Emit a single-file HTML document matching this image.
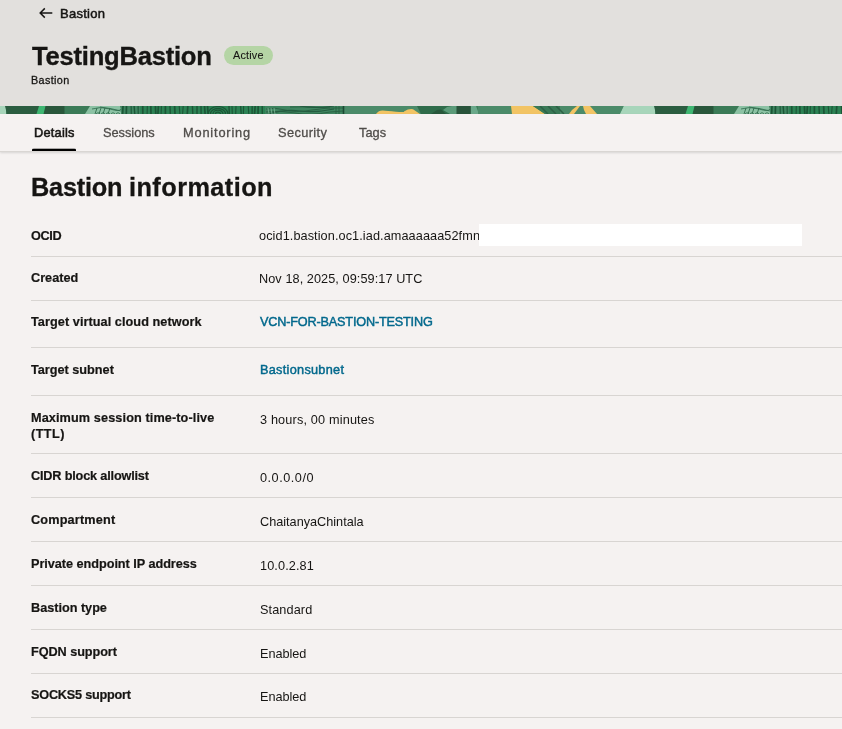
<!DOCTYPE html>
<html><head><meta charset="utf-8">
<style>
*{box-sizing:border-box;margin:0;padding:0}
html,body{width:842px;height:729px;overflow:hidden}
body{font-family:"Liberation Sans",sans-serif;background:#f5f2f1;color:#161513;position:relative}
.hdr{position:absolute;left:0;top:0;width:842px;height:106px;background:#e2e0dd}
.strip{position:absolute;left:0;top:106px;width:842px;height:8px;overflow:hidden}
.tabs{position:absolute;left:0;top:114px;width:842px;height:38px;background:#f5f2f1;border-bottom:1px solid #d9d6d3;box-shadow:0 1px 2px rgba(0,0,0,.12)}
.t{position:absolute;white-space:nowrap;line-height:1;will-change:transform}
.row{position:absolute;left:31px;width:811px;height:1px;background:#d8d5d2}
</style></head><body>
<div class="hdr"></div>
<svg style="position:absolute;left:38px;top:7px" width="16" height="12" viewBox="0 0 16 12"><path d="M6.8 1.4 L2.2 6 L6.8 10.6 M2.2 6 H14.3" fill="none" stroke="#161513" stroke-width="1.5"/></svg>
<div style="position:absolute;left:224px;top:46px;width:49px;height:19px;border-radius:10px;background:#b5d5a5"></div>
<svg class="strip" width="842" height="8" viewBox="0 0 842 8" preserveAspectRatio="none"><rect width="842" height="8" fill="#3f7f5a"/><polygon points="-25.0,0 6.0,0 6.0,8 -28.5,8" fill="#a7d5ba"/>
<polygon points="5.0,0 38.0,0 36.0,8 7.0,8" fill="#2b5d40"/>
<rect x="36.0" y="0" width="30.0" height="8" fill="#2b5d40"/>
<polygon points="39.0,0 45.5,0 43.5,8 36.5,8" fill="#3eb772"/>
<polygon points="46.0,0 64.0,0 65.0,8 44.0,8" fill="#29573b"/>
<rect x="64.5" y="0" width="25.5" height="8" fill="#3b7b57"/>
<polygon points="90.0,0 120.0,0 122.0,8 85.0,8" fill="#8cc2a4"/>
<rect x="121.0" y="0" width="20.0" height="8" fill="#3f8560"/>
<rect x="140.0" y="0" width="126.0" height="8" fill="#2c8254"/>
<rect x="265.0" y="0" width="80.0" height="8" fill="#3f8560"/>
<rect x="344.0" y="0" width="77.0" height="8" fill="#4b8b69"/>
<polygon points="417.0,0 458.0,0 458.0,8 421.0,8" fill="#2f6c4a"/>
<polygon points="431.0,8 437.0,4 441.0,3.5 446.0,8" fill="#28583c"/>
<polygon points="447.0,1 452.0,0 458.0,0 458.0,8 450.0,8 443.0,4" fill="#5b9b79"/>
<rect x="456.5" y="0" width="14.5" height="8" fill="#28533a"/>
<polygon points="470.8,0 476.0,0 479.0,8 470.8,8" fill="#6aa98a"/>
<rect x="478.0" y="0" width="34.0" height="8" fill="#4b8b69"/>
<polygon points="511.0,0 533.0,0 545.0,8 512.0,8" fill="#f2c464"/>
<polygon points="533.0,0 562.0,0 562.0,8 545.0,8" fill="#3a7a57"/>
<rect x="560.0" y="0" width="65.0" height="8" fill="#4b8b69"/>
<polygon points="572.0,4 577.0,0 580.0,0 574.0,8 569.0,8" fill="#f2c464"/>
<polygon points="583.0,0 590.0,0 597.0,8 586.0,8 584.0,4" fill="#f2c464"/>
<polygon points="624.0,0 652.0,0 655.0,8 620.0,8" fill="#a7d5ba"/><path d="M95.0 8 L97.0 2" stroke="#2f6b4b" stroke-width="0.9" fill="none"/>
<path d="M99.0 8 L101.0 2" stroke="#2f6b4b" stroke-width="0.9" fill="none"/>
<path d="M103.0 8 L105.0 2" stroke="#2f6b4b" stroke-width="0.9" fill="none"/>
<path d="M108.0 8 L110.0 2" stroke="#2f6b4b" stroke-width="0.9" fill="none"/>
<path d="M92 3 Q100 0 110 3 T121 3" stroke="#2f6b4b" stroke-width="0.8" fill="none"/>
<path d="M100 1 Q110 2 121 5" stroke="#2f6b4b" stroke-width="0.8" fill="none"/>
<path d="M123.0 0 L122.6 8" stroke="#1b5636" stroke-width="1.7" fill="none"/>
<path d="M126.5 0 L126.3 8" stroke="#1b5636" stroke-width="1.7" fill="none"/>
<path d="M131.1 0 L131.3 8" stroke="#1b5636" stroke-width="1.1" fill="none"/>
<path d="M134.1 0 L134.8 8" stroke="#1b5636" stroke-width="1.4" fill="none"/>
<path d="M138.1 0 L138.2 8" stroke="#1b5636" stroke-width="1.1" fill="none"/>
<path d="M142.7 0 L142.8 8" stroke="#1b5636" stroke-width="1.7" fill="none"/>
<path d="M147.3 0 L147.1 8" stroke="#1b5636" stroke-width="1.1" fill="none"/>
<path d="M150.8 0 L151.0 8" stroke="#1b5636" stroke-width="1.7" fill="none"/>
<path d="M155.4 0 L155.8 8" stroke="#1b5636" stroke-width="1.7" fill="none"/>
<path d="M158.4 0 L157.9 8" stroke="#1b5636" stroke-width="1.7" fill="none"/>
<path d="M161.4 0 L161.1 8" stroke="#1b5636" stroke-width="1.1" fill="none"/>
<path d="M165.4 0 L165.4 8" stroke="#1b5636" stroke-width="1.7" fill="none"/>
<path d="M170.0 0 L170.3 8" stroke="#1b5636" stroke-width="1.4" fill="none"/>
<path d="M174.6 0 L175.0 8" stroke="#1b5636" stroke-width="1.7" fill="none"/>
<path d="M179.2 0 L179.9 8" stroke="#1b5636" stroke-width="1.1" fill="none"/>
<path d="M183.2 0 L182.6 8" stroke="#1b5636" stroke-width="1.1" fill="none"/>
<path d="M187.8 0 L187.3 8" stroke="#1b5636" stroke-width="1.7" fill="none"/>
<path d="M192.4 0 L192.8 8" stroke="#1b5636" stroke-width="1.4" fill="none"/>
<path d="M197.0 0 L197.0 8" stroke="#1b5636" stroke-width="1.4" fill="none"/>
<path d="M201.0 0 L201.1 8" stroke="#1b5636" stroke-width="1.4" fill="none"/>
<path d="M204.5 0 L205.1 8" stroke="#1b5636" stroke-width="1.7" fill="none"/>
<path d="M207.5 0 L208.1 8" stroke="#1b5636" stroke-width="1.7" fill="none"/>
<path d="M229.0 0 L229.3 8" stroke="#1b5636" stroke-width="1.4" fill="none"/>
<path d="M232.0 0 L232.3 8" stroke="#1b5636" stroke-width="1.1" fill="none"/>
<path d="M236.0 0 L235.7 8" stroke="#1b5636" stroke-width="1.1" fill="none"/>
<path d="M240.6 0 L241.2 8" stroke="#1b5636" stroke-width="1.4" fill="none"/>
<path d="M243.6 0 L243.4 8" stroke="#1b5636" stroke-width="1.1" fill="none"/>
<path d="M248.2 0 L248.8 8" stroke="#1b5636" stroke-width="1.1" fill="none"/>
<path d="M252.2 0 L252.1 8" stroke="#1b5636" stroke-width="1.4" fill="none"/>
<path d="M255.2 0 L254.5 8" stroke="#1b5636" stroke-width="1.7" fill="none"/>
<path d="M258.2 0 L258.0 8" stroke="#1b5636" stroke-width="1.7" fill="none"/>
<path d="M262.2 0 L262.3 8" stroke="#1b5636" stroke-width="1.4" fill="none"/>
<path d="M215.5 8 A2.5 1.9 0 0 1 220.5 8" stroke="#1b5636" stroke-width="1.2" fill="none"/>
<path d="M213 8 A5 3.8 0 0 1 223 8" stroke="#1b5636" stroke-width="1.2" fill="none"/>
<path d="M210.5 8 A7.5 5.6 0 0 1 225.5 8" stroke="#1b5636" stroke-width="1.2" fill="none"/>
<path d="M208 8 A10 7.5 0 0 1 228 8" stroke="#1b5636" stroke-width="1.2" fill="none"/>
<path d="M266 3 Q275 1 285 4 T312 4 T343 2" stroke="#2a6445" stroke-width="1" fill="none"/>
<path d="M266 6 Q280 4 295 7 T330 6 L343 5" stroke="#2a6445" stroke-width="1" fill="none"/>
<path d="M290 1 Q310 0 330 2" stroke="#2a6445" stroke-width="1" fill="none"/>
<path d="M336.0 0 L336.0 8" stroke="#2a6445" stroke-width="1" fill="none"/>
<path d="M339.0 0 L339.0 8" stroke="#2a6445" stroke-width="1" fill="none"/>
<path d="M343.5 0 L343.5 8" stroke="#1b4a33" stroke-width="1.6" fill="none"/>
<path d="M268 8 Q285 3 300 5 T334 3" stroke="#245c40" stroke-width="1.2" fill="none"/>
<path d="M300 0 Q315 3 334 0" stroke="#245c40" stroke-width="1.2" fill="none"/>
<path d="M96 8 A2.5 3 0 0 1 100 8" stroke="#2f6b4b" stroke-width="0.8" fill="none"/>
<path d="M101 8 A2.5 3 0 0 1 105 8" stroke="#2f6b4b" stroke-width="0.8" fill="none"/>
<path d="M106 8 A2.5 3 0 0 1 110 8" stroke="#2f6b4b" stroke-width="0.8" fill="none"/>
<path d="M111 8 A2.5 3 0 0 1 115 8" stroke="#2f6b4b" stroke-width="0.8" fill="none"/>
<path d="M116 8 A2.5 3 0 0 1 120 8" stroke="#2f6b4b" stroke-width="0.8" fill="none"/>
<path d="M268.0 2 L269.0 8" stroke="#7fb799" stroke-width="0.8" fill="none"/>
<path d="M271.0 2 L272.0 8" stroke="#7fb799" stroke-width="0.8" fill="none"/>
<path d="M274.0 2 L275.0 8" stroke="#7fb799" stroke-width="0.8" fill="none"/>
<path d="M376 8 Q379 4.2 383 4.6 T396 5.8 T404 5.4 Q409 2.4 413 3.2 L420 8 Z" fill="#f2c464"/>
<path d="M540.0 0 L548.0 8" stroke="#2d6246" stroke-width="1.5" fill="none"/>
<path d="M548.0 0 L556.0 8" stroke="#2d6246" stroke-width="1.5" fill="none"/>
<path d="M556.0 0 L564.0 8" stroke="#2d6246" stroke-width="1.5" fill="none"/><polygon points="624.0,0 655.0,0 655.0,8 620.5,8" fill="#a7d5ba"/>
<polygon points="654.0,0 687.0,0 685.0,8 656.0,8" fill="#2b5d40"/>
<rect x="685.0" y="0" width="30.0" height="8" fill="#2b5d40"/>
<polygon points="688.0,0 694.5,0 692.5,8 685.5,8" fill="#3eb772"/>
<polygon points="695.0,0 713.0,0 714.0,8 693.0,8" fill="#29573b"/>
<rect x="713.5" y="0" width="25.5" height="8" fill="#3b7b57"/>
<polygon points="739.0,0 769.0,0 771.0,8 734.0,8" fill="#8cc2a4"/>
<rect x="770.0" y="0" width="20.0" height="8" fill="#3f8560"/>
<rect x="789.0" y="0" width="126.0" height="8" fill="#2c8254"/>
<rect x="914.0" y="0" width="80.0" height="8" fill="#3f8560"/>
<rect x="993.0" y="0" width="77.0" height="8" fill="#4b8b69"/>
<polygon points="1066.0,0 1107.0,0 1107.0,8 1070.0,8" fill="#2f6c4a"/>
<polygon points="1080.0,8 1086.0,4 1090.0,3.5 1095.0,8" fill="#28583c"/>
<polygon points="1096.0,1 1101.0,0 1107.0,0 1107.0,8 1099.0,8 1092.0,4" fill="#5b9b79"/>
<rect x="1105.5" y="0" width="14.5" height="8" fill="#28533a"/>
<polygon points="1119.8,0 1125.0,0 1128.0,8 1119.8,8" fill="#6aa98a"/>
<rect x="1127.0" y="0" width="34.0" height="8" fill="#4b8b69"/>
<polygon points="1160.0,0 1182.0,0 1194.0,8 1161.0,8" fill="#f2c464"/>
<polygon points="1182.0,0 1211.0,0 1211.0,8 1194.0,8" fill="#3a7a57"/>
<rect x="1209.0" y="0" width="65.0" height="8" fill="#4b8b69"/>
<polygon points="1221.0,4 1226.0,0 1229.0,0 1223.0,8 1218.0,8" fill="#f2c464"/>
<polygon points="1232.0,0 1239.0,0 1246.0,8 1235.0,8 1233.0,4" fill="#f2c464"/>
<polygon points="1273.0,0 1301.0,0 1304.0,8 1269.0,8" fill="#a7d5ba"/><path d="M744.0 8 L746.0 2" stroke="#2f6b4b" stroke-width="0.9" fill="none"/>
<path d="M748.0 8 L750.0 2" stroke="#2f6b4b" stroke-width="0.9" fill="none"/>
<path d="M752.0 8 L754.0 2" stroke="#2f6b4b" stroke-width="0.9" fill="none"/>
<path d="M757.0 8 L759.0 2" stroke="#2f6b4b" stroke-width="0.9" fill="none"/>
<path d="M741 3 Q749 0 759 3 T770 3" stroke="#2f6b4b" stroke-width="0.8" fill="none"/>
<path d="M749 1 Q759 2 770 5" stroke="#2f6b4b" stroke-width="0.8" fill="none"/>
<path d="M772.0 0 L771.6 8" stroke="#1b5636" stroke-width="1.7" fill="none"/>
<path d="M775.5 0 L775.3 8" stroke="#1b5636" stroke-width="1.7" fill="none"/>
<path d="M780.1 0 L780.3 8" stroke="#1b5636" stroke-width="1.1" fill="none"/>
<path d="M783.1 0 L783.8 8" stroke="#1b5636" stroke-width="1.4" fill="none"/>
<path d="M787.1 0 L787.2 8" stroke="#1b5636" stroke-width="1.1" fill="none"/>
<path d="M791.7 0 L791.8 8" stroke="#1b5636" stroke-width="1.7" fill="none"/>
<path d="M796.3 0 L796.1 8" stroke="#1b5636" stroke-width="1.1" fill="none"/>
<path d="M799.8 0 L800.0 8" stroke="#1b5636" stroke-width="1.7" fill="none"/>
<path d="M804.4 0 L804.8 8" stroke="#1b5636" stroke-width="1.7" fill="none"/>
<path d="M807.4 0 L806.9 8" stroke="#1b5636" stroke-width="1.7" fill="none"/>
<path d="M810.4 0 L810.1 8" stroke="#1b5636" stroke-width="1.1" fill="none"/>
<path d="M814.4 0 L814.4 8" stroke="#1b5636" stroke-width="1.7" fill="none"/>
<path d="M819.0 0 L819.3 8" stroke="#1b5636" stroke-width="1.4" fill="none"/>
<path d="M823.6 0 L824.0 8" stroke="#1b5636" stroke-width="1.7" fill="none"/>
<path d="M828.2 0 L828.9 8" stroke="#1b5636" stroke-width="1.1" fill="none"/>
<path d="M832.2 0 L831.6 8" stroke="#1b5636" stroke-width="1.1" fill="none"/>
<path d="M836.8 0 L836.3 8" stroke="#1b5636" stroke-width="1.7" fill="none"/>
<path d="M841.4 0 L841.8 8" stroke="#1b5636" stroke-width="1.4" fill="none"/>
<path d="M846.0 0 L846.0 8" stroke="#1b5636" stroke-width="1.4" fill="none"/>
<path d="M850.0 0 L850.1 8" stroke="#1b5636" stroke-width="1.4" fill="none"/>
<path d="M853.5 0 L854.1 8" stroke="#1b5636" stroke-width="1.7" fill="none"/>
<path d="M856.5 0 L857.1 8" stroke="#1b5636" stroke-width="1.7" fill="none"/>
<path d="M878.0 0 L878.3 8" stroke="#1b5636" stroke-width="1.4" fill="none"/>
<path d="M881.0 0 L881.3 8" stroke="#1b5636" stroke-width="1.1" fill="none"/>
<path d="M885.0 0 L884.7 8" stroke="#1b5636" stroke-width="1.1" fill="none"/>
<path d="M889.6 0 L890.2 8" stroke="#1b5636" stroke-width="1.4" fill="none"/>
<path d="M892.6 0 L892.4 8" stroke="#1b5636" stroke-width="1.1" fill="none"/>
<path d="M897.2 0 L897.8 8" stroke="#1b5636" stroke-width="1.1" fill="none"/>
<path d="M901.2 0 L901.1 8" stroke="#1b5636" stroke-width="1.4" fill="none"/>
<path d="M904.2 0 L903.5 8" stroke="#1b5636" stroke-width="1.7" fill="none"/>
<path d="M907.2 0 L907.0 8" stroke="#1b5636" stroke-width="1.7" fill="none"/>
<path d="M911.2 0 L911.3 8" stroke="#1b5636" stroke-width="1.4" fill="none"/>
<path d="M864.5 8 A2.5 1.9 0 0 1 869.5 8" stroke="#1b5636" stroke-width="1.2" fill="none"/>
<path d="M862 8 A5 3.8 0 0 1 872 8" stroke="#1b5636" stroke-width="1.2" fill="none"/>
<path d="M859.5 8 A7.5 5.6 0 0 1 874.5 8" stroke="#1b5636" stroke-width="1.2" fill="none"/>
<path d="M857 8 A10 7.5 0 0 1 877 8" stroke="#1b5636" stroke-width="1.2" fill="none"/>
<path d="M915 3 Q924 1 934 4 T961 4 T992 2" stroke="#2a6445" stroke-width="1" fill="none"/>
<path d="M915 6 Q929 4 944 7 T979 6 L992 5" stroke="#2a6445" stroke-width="1" fill="none"/>
<path d="M939 1 Q959 0 979 2" stroke="#2a6445" stroke-width="1" fill="none"/>
<path d="M985.0 0 L985.0 8" stroke="#2a6445" stroke-width="1" fill="none"/>
<path d="M988.0 0 L988.0 8" stroke="#2a6445" stroke-width="1" fill="none"/>
<path d="M992.5 0 L992.5 8" stroke="#1b4a33" stroke-width="1.6" fill="none"/>
<path d="M917 8 Q934 3 949 5 T983 3" stroke="#245c40" stroke-width="1.2" fill="none"/>
<path d="M949 0 Q964 3 983 0" stroke="#245c40" stroke-width="1.2" fill="none"/>
<path d="M745 8 A2.5 3 0 0 1 749 8" stroke="#2f6b4b" stroke-width="0.8" fill="none"/>
<path d="M750 8 A2.5 3 0 0 1 754 8" stroke="#2f6b4b" stroke-width="0.8" fill="none"/>
<path d="M755 8 A2.5 3 0 0 1 759 8" stroke="#2f6b4b" stroke-width="0.8" fill="none"/>
<path d="M760 8 A2.5 3 0 0 1 764 8" stroke="#2f6b4b" stroke-width="0.8" fill="none"/>
<path d="M765 8 A2.5 3 0 0 1 769 8" stroke="#2f6b4b" stroke-width="0.8" fill="none"/>
<path d="M917.0 2 L918.0 8" stroke="#7fb799" stroke-width="0.8" fill="none"/>
<path d="M920.0 2 L921.0 8" stroke="#7fb799" stroke-width="0.8" fill="none"/>
<path d="M923.0 2 L924.0 8" stroke="#7fb799" stroke-width="0.8" fill="none"/>
<path d="M1025 8 Q1028 4.2 1032 4.6 T1045 5.8 T1053 5.4 Q1058 2.4 1062 3.2 L1069 8 Z" fill="#f2c464"/>
<path d="M1189.0 0 L1197.0 8" stroke="#2d6246" stroke-width="1.5" fill="none"/>
<path d="M1197.0 0 L1205.0 8" stroke="#2d6246" stroke-width="1.5" fill="none"/>
<path d="M1205.0 0 L1213.0 8" stroke="#2d6246" stroke-width="1.5" fill="none"/></svg>
<div class="tabs"></div>
<div style="position:absolute;left:32px;top:148px;width:44px;height:3px;background:linear-gradient(to bottom,rgba(0,0,0,.3) 0,rgba(0,0,0,.3) 1px,#000 1px);border-radius:2px 2px 0 0"></div>

<span class="t" id="bc" style="left:60.39px;top:7.10px;font-size:13px;font-weight:400;color:#161513;letter-spacing:0.252px;-webkit-text-stroke:0.5px #161513">Bastion</span>
<span class="t" id="title" style="left:32.21px;top:43.53px;font-size:25.6px;font-weight:700;color:#161513;letter-spacing:-0.241px;-webkit-text-stroke:0.35px #161513">TestingBastion</span>
<span class="t" id="sub" style="left:31.08px;top:74.66px;font-size:10.8px;font-weight:400;color:#161513;letter-spacing:0.357px;-webkit-text-stroke:0.3px #161513">Bastion</span>
<span class="t" id="bt" style="left:233.36px;top:49.56px;font-size:10.8px;font-weight:400;color:#161513;letter-spacing:0.203px;-webkit-text-stroke:0.1px #161513">Active</span>
<span class="t" id="tab1" style="left:33.74px;top:127.16px;font-size:12.8px;font-weight:400;color:#161513;letter-spacing:0.234px;-webkit-text-stroke:0.55px #161513">Details</span>
<span class="t" id="tab2" style="left:103.18px;top:127.16px;font-size:12.8px;font-weight:400;color:#4f4c49;letter-spacing:-0.026px;-webkit-text-stroke:0.3px #4f4c49">Sessions</span>
<span class="t" id="tab3" style="left:182.58px;top:127.16px;font-size:12.8px;font-weight:400;color:#4f4c49;letter-spacing:0.823px;-webkit-text-stroke:0.3px #4f4c49">Monitoring</span>
<span class="t" id="tab4" style="left:278.04px;top:127.16px;font-size:12.8px;font-weight:400;color:#4f4c49;letter-spacing:0.366px;-webkit-text-stroke:0.3px #4f4c49">Security</span>
<span class="t" id="tab5" style="left:359.08px;top:127.16px;font-size:12.8px;font-weight:400;color:#4f4c49;letter-spacing:-0.002px;-webkit-text-stroke:0.3px #4f4c49">Tags</span>
<span class="t" id="h2a" style="left:31.26px;top:175.28px;font-size:25.3px;font-weight:700;color:#161513;letter-spacing:-0.219px;-webkit-text-stroke:0.3px #161513">Bastion</span>
<span class="t" id="h2b" style="left:128.80px;top:175.28px;font-size:25.3px;font-weight:700;color:#161513;letter-spacing:0.444px;-webkit-text-stroke:0.3px #161513">information</span>
<span class="t" id="l1" style="left:31.10px;top:229.75px;font-size:12.7px;font-weight:700;color:#161513;letter-spacing:-0.374px;-webkit-text-stroke:0.2px #161513">OCID</span>
<span class="t" id="l2" style="left:31.00px;top:272.05px;font-size:12.7px;font-weight:700;color:#161513;letter-spacing:-0.004px;-webkit-text-stroke:0.2px #161513">Created</span>
<span class="t" id="l3" style="left:31.19px;top:315.95px;font-size:12.7px;font-weight:700;color:#161513;letter-spacing:0.059px;-webkit-text-stroke:0.2px #161513">Target virtual cloud network</span>
<span class="t" id="l4" style="left:31.19px;top:363.55px;font-size:12.7px;font-weight:700;color:#161513;letter-spacing:-0.006px;-webkit-text-stroke:0.2px #161513">Target subnet</span>
<span class="t" id="l5a" style="left:30.74px;top:411.75px;font-size:12.7px;font-weight:700;color:#161513;letter-spacing:0.103px;-webkit-text-stroke:0.2px #161513">Maximum session time-to-live</span>
<span class="t" id="l5b" style="left:30.76px;top:427.75px;font-size:12.7px;font-weight:700;color:#161513;letter-spacing:0.420px;-webkit-text-stroke:0.2px #161513">(TTL)</span>
<span class="t" id="l6" style="left:31.11px;top:470.25px;font-size:12.7px;font-weight:700;color:#161513;letter-spacing:-0.173px;-webkit-text-stroke:0.2px #161513">CIDR block allowlist</span>
<span class="t" id="l7" style="left:31.32px;top:513.55px;font-size:12.7px;font-weight:700;color:#161513;letter-spacing:0.167px;-webkit-text-stroke:0.2px #161513">Compartment</span>
<span class="t" id="l8" style="left:30.74px;top:558.45px;font-size:12.7px;font-weight:700;color:#161513;letter-spacing:-0.040px;-webkit-text-stroke:0.2px #161513">Private endpoint IP address</span>
<span class="t" id="l9" style="left:30.52px;top:602.45px;font-size:12.7px;font-weight:700;color:#161513;letter-spacing:-0.020px;-webkit-text-stroke:0.2px #161513">Bastion type</span>
<span class="t" id="l10" style="left:30.80px;top:646.45px;font-size:12.7px;font-weight:700;color:#161513;letter-spacing:-0.066px;-webkit-text-stroke:0.2px #161513">FQDN support</span>
<span class="t" id="l11" style="left:30.98px;top:689.35px;font-size:12.7px;font-weight:700;color:#161513;letter-spacing:-0.221px;-webkit-text-stroke:0.2px #161513">SOCKS5 support</span>
<span class="t" id="v1" style="left:259.11px;top:230.25px;font-size:12.7px;font-weight:400;color:#161513;letter-spacing:0.088px">ocid1.bastion.oc1.iad.amaaaaaa52fmn</span>
<span class="t" id="v2" style="left:259.04px;top:272.95px;font-size:12.7px;font-weight:400;color:#161513;letter-spacing:0.074px">Nov 18, 2025, 09:59:17 UTC</span>
<span class="t" id="v3" style="left:260.10px;top:316.05px;font-size:12.7px;font-weight:400;color:#00688c;letter-spacing:-0.187px;-webkit-text-stroke:0.45px #00688c">VCN-FOR-BASTION-TESTING</span>
<span class="t" id="v4" style="left:259.57px;top:363.55px;font-size:12.7px;font-weight:400;color:#00688c;letter-spacing:0.295px;-webkit-text-stroke:0.45px #00688c">Bastionsubnet</span>
<span class="t" id="v5" style="left:259.69px;top:414.05px;font-size:12.7px;font-weight:400;color:#161513;letter-spacing:0.162px">3 hours, 00 minutes</span>
<span class="t" id="v6" style="left:259.81px;top:472.05px;font-size:12.7px;font-weight:400;color:#161513;letter-spacing:0.514px">0.0.0.0/0</span>
<span class="t" id="v7" style="left:259.76px;top:516.15px;font-size:12.7px;font-weight:400;color:#161513;letter-spacing:-0.007px">ChaitanyaChintala</span>
<span class="t" id="v8" style="left:260.30px;top:560.05px;font-size:12.7px;font-weight:400;color:#161513;letter-spacing:0.113px">10.0.2.81</span>
<span class="t" id="v9" style="left:259.99px;top:604.25px;font-size:12.7px;font-weight:400;color:#161513;letter-spacing:0.106px">Standard</span>
<span class="t" id="v10" style="left:259.53px;top:648.25px;font-size:12.7px;font-weight:400;color:#161513;letter-spacing:-0.022px">Enabled</span>
<span class="t" id="v11" style="left:259.53px;top:691.25px;font-size:12.7px;font-weight:400;color:#161513;letter-spacing:-0.022px">Enabled</span>
<div style="position:absolute;left:479px;top:224px;width:323px;height:22px;background:#fff"></div>
<div class="row" style="top:256px"></div>
<div class="row" style="top:300px"></div>
<div class="row" style="top:347px"></div>
<div class="row" style="top:395px"></div>
<div class="row" style="top:453px"></div>
<div class="row" style="top:497px"></div>
<div class="row" style="top:541px"></div>
<div class="row" style="top:585px"></div>
<div class="row" style="top:629px"></div>
<div class="row" style="top:673px"></div>
<div class="row" style="top:717px"></div>
</body></html>
